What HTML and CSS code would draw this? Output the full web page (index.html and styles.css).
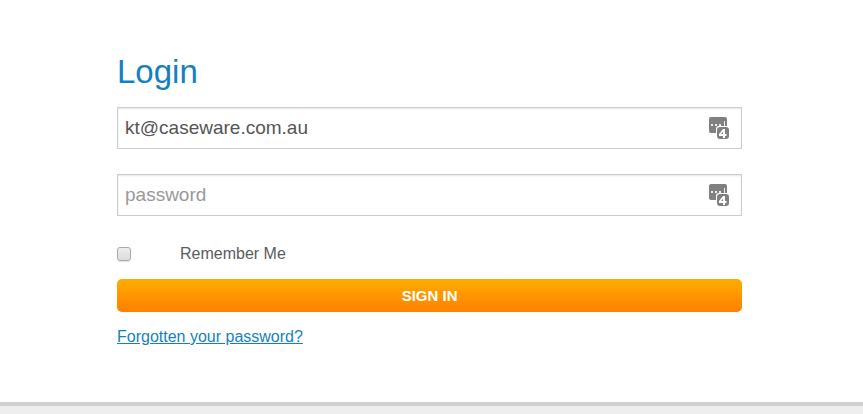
FILE: index.html
```
<!DOCTYPE html>
<html lang="en">
<head>
<meta charset="utf-8">
<meta name="viewport" content="width=device-width, initial-scale=1">
<title>Login</title>
<link rel="stylesheet" href="styles.css">
</head>
<body>
<main class="login">
  <h1 class="title">Login</h1>
  <form class="form">
    <div class="field">
      <input class="input" type="email" aria-label="Email" value="kt@caseware.com.au">
      <svg class="badge" viewBox="0 0 22 24" aria-hidden="true">
        <path d="M3 1H17Q19 1 19 3V10H11Q8 10 8 13V17H3Q1 17 1 15V3Q1 1 3 1Z" fill="#808080"/>
        <path d="M3 8h2v2H3zM7 8h2v2H7zM11 8h2v2h-2zM16 5h1v6h-1z" fill="#eee"/>
        <rect x="9" y="11" width="12" height="12" rx="3" fill="#808080"/>
        <path fill-rule="evenodd" d="M15 13H17V18H18.500V20H17V22H15V20H11V18ZM15 15.700L13.200 18H15Z" fill="#fff"/>
      </svg>
    </div>
    <div class="field">
      <input class="input" type="password" aria-label="Password" placeholder="password">
      <svg class="badge" viewBox="0 0 22 24" aria-hidden="true">
        <path d="M3 1H17Q19 1 19 3V10H11Q8 10 8 13V17H3Q1 17 1 15V3Q1 1 3 1Z" fill="#808080"/>
        <path d="M3 8h2v2H3zM7 8h2v2H7zM11 8h2v2h-2zM16 5h1v6h-1z" fill="#eee"/>
        <rect x="9" y="11" width="12" height="12" rx="3" fill="#808080"/>
        <path fill-rule="evenodd" d="M15 13H17V18H18.500V20H17V22H15V20H11V18ZM15 15.700L13.200 18H15Z" fill="#fff"/>
      </svg>
    </div>
    <div class="remember">
      <input class="check" type="checkbox" id="remember">
      <label for="remember">Remember Me</label>
    </div>
    <button class="submit" type="submit">SIGN IN</button>
  </form>
  <a class="forgot" href="#">Forgotten your password?</a>
</main>
<footer class="footer"></footer>
</body>
</html>
```
FILE: styles.css
```
* {
  box-sizing: border-box;
}

body {
  display: flex;
  flex-direction: column;
  min-height: 100vh;
  margin: 0;
  background: #fff;
  color: #5c5c5c;
  font: 16px/20px "Liberation Sans", Arial, sans-serif;
}

.login {
  padding: 52px 14% 55px 117px;
}

.title {
  margin: 0 0 15px;
  color: #157fc4;
  font-size: 33px;
  font-weight: 400;
  line-height: 40px;
}

.field {
  position: relative;
  margin-bottom: 25px;
}

.input {
  display: block;
  width: 100%;
  height: 42px;
  padding: 0 44px 0 7px;
  border: 1px solid #ccc;
  border-radius: 0;
  outline: 0;
  background: #fff;
  box-shadow: inset 0 1px 2px rgba(0, 0, 0, 0.1);
  color: #555;
  font: inherit;
  font-size: 19px;
}

.input::placeholder {
  color: #999;
  opacity: 1;
}

.badge {
  position: absolute;
  top: 9px;
  right: 12px;
  width: 22px;
  height: 24px;
}

.remember {
  display: flex;
  align-items: center;
  gap: 49px;
  margin: 28px 0 15px;
}

.check {
  appearance: none;
  width: 14px;
  height: 14px;
  margin: 0;
  border: 1px solid #aaa;
  border-radius: 3px;
  background: linear-gradient(#ededed, #dcdcdc);
  box-shadow: 0 1px 1px rgba(0, 0, 0, 0.12);
}

.check:checked {
  background: #157fc4;
}

.submit {
  display: block;
  width: 100%;
  height: 33px;
  margin-bottom: 15px;
  padding: 0;
  border: 0;
  border-radius: 5px;
  background: linear-gradient(#ffad00, #ff8000);
  color: #fff;
  font: inherit;
  font-size: 15px;
  font-weight: 700;
}

.forgot {
  color: #157fc4;
}

.footer {
  flex: 1;
  border-top: 4px solid #d0d0d0;
  background: #eee;
}
```
